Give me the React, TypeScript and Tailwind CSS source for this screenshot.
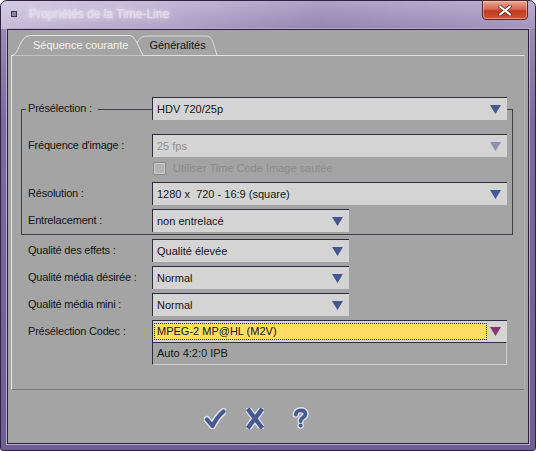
import React from 'react';

const Arrow = ({ color }: { color: string }) => (
  <svg width="11" height="9" viewBox="0 0 11 9">
    <path d="M0 0H11L5.5 9Z" fill={color} />
  </svg>
);

interface SelectProps {
  value: string;
  wide?: boolean;
  disabled?: boolean;
}

const Select: React.FC<SelectProps> = ({ value, wide = true, disabled = false }) => (
  <div
    className={`flex h-[23px] items-center justify-between border-l border-t border-[#2d2d3d] bg-[#d4d4d4] pl-[4px] pr-[6px] ${
      wide ? 'w-[355px]' : 'w-[197px]'
    }`}
  >
    <span className={`whitespace-pre ${disabled ? 'text-[#8e8e8e]' : 'text-[#141414]'}`}>{value}</span>
    <Arrow color={disabled ? '#8c92aa' : '#46568e'} />
  </div>
);

// rows inside the group box (label sits on the top line of the box)
const GroupRow: React.FC<{ label: string; children: React.ReactNode; className?: string }> = ({
  label,
  children,
  className = ''
}) => (
  <div className={`flex items-center ${className}`}>
    <div className="w-[130px] pl-[4px] tracking-[-0.2px]">
      <span className="bg-[#a4a4a4] pl-[2px] pr-[6px]">{label}</span>
    </div>
    {children}
  </div>
);

const Row: React.FC<{ label: string; children: React.ReactNode }> = ({ label, children }) => (
  <div className="mt-[4px] flex items-start pl-[16px]">
    <div className="flex h-[23px] w-[124px] items-center tracking-[-0.2px]">{label}</div>
    {children}
  </div>
);

const CheckIcon = () => (
  <svg width="22" height="21" viewBox="0 0 22 21">
    <path d="M3 11.5 L8.5 18 Q13 9 19.5 3.5" fill="none" stroke="#dde2f0" strokeWidth="7" strokeLinejoin="round" strokeLinecap="round" />
    <path d="M3 11.5 L8.5 18 Q13 9 19.5 3.5" fill="none" stroke="#48598f" strokeWidth="4.2" strokeLinejoin="round" strokeLinecap="round" />
  </svg>
);

const CrossIcon = () => (
  <svg width="18" height="21" viewBox="0 0 18 21">
    <path d="M3 2.5 L15 18.5 M15 2.5 L3 18.5" fill="none" stroke="#dde2f0" strokeWidth="7" strokeLinecap="square" />
    <path d="M3 2.5 L15 18.5 M15 2.5 L3 18.5" fill="none" stroke="#48598f" strokeWidth="4.4" strokeLinecap="square" />
  </svg>
);

const HelpIcon = () => (
  <svg width="17" height="22" viewBox="0 0 17 22">
    <path d="M3.8 7.5 C3.8 2 13.5 2 13.5 7 C13.5 10.5 8.6 10.5 8.6 14" fill="none" stroke="#dde2f0" strokeWidth="6.4" strokeLinecap="round" />
    <circle cx="8.6" cy="18.6" r="3.2" fill="#dde2f0" />
    <path d="M3.8 7.5 C3.8 2 13.5 2 13.5 7 C13.5 10.5 8.6 10.5 8.6 14" fill="none" stroke="#48598f" strokeWidth="3.8" strokeLinecap="round" />
    <circle cx="8.6" cy="18.6" r="2" fill="#48598f" />
  </svg>
);

const Tabs = () => (
  <div className="relative ml-[4px] mt-[5px] h-[20px] w-[230px]">
    <svg className="absolute left-0 top-0" width="230" height="21" viewBox="0 0 230 21">
      <path d="M125 8 C128 2 131 1 136 1 L194 1 C200 1 201 7 205 20.5" fill="none" stroke="#dcdcdc" strokeWidth="1" />
      <path d="M0 20.5 C7 20.5 7 1 18 0.5 L117 0.5 C124 0.5 126 12 131 20.5" fill="#a4a4a4" stroke="#e4e4e4" strokeWidth="1" />
    </svg>
    <div className="relative flex h-[20px] items-center">
      <span className="ml-[21px] text-[#f2f2f2]">Séquence courante</span>
      <span className="ml-[21px] text-[#151515]">Généralités</span>
    </div>
  </div>
);

export default function App() {
  return (
    <div className="h-[451px] w-[536px] bg-white font-['Liberation_Sans',Arial,sans-serif] text-[11px]">
      <div className="flex h-[451px] w-[536px] flex-col rounded-t-[7px] rounded-b-[3px] border border-[#2b2340] bg-[linear-gradient(180deg,#b9accd_0px,#9989b5_28px,#7b6a9d_120px,#6f5f91_100%)]">
        {/* title bar */}
        <div className="flex h-[28px] items-start justify-between rounded-t-[6px] bg-[linear-gradient(90deg,rgba(235,230,245,0.55)_0%,rgba(220,210,235,0.35)_30%,rgba(120,100,150,0.15)_60%,rgba(200,190,220,0.2)_100%)]">
          <div className="flex h-[24px] items-center pt-[1px]">
            <div className="ml-[10px] h-[6px] w-[6px] border border-[#3a3548] bg-[#8c8898]" />
            <span className="ml-[12px] text-[12px] text-[#e2dcec] [text-shadow:0_0_6px_rgba(255,255,255,0.9),0_0_2px_rgba(255,255,255,0.6)]">
              Propriétés de la Time-Line
            </span>
          </div>
          <div className="mr-[7px] -mt-[1px] flex h-[20px] w-[46px] items-center justify-center rounded-b-[4px] border border-[#5a2a2a] bg-[linear-gradient(180deg,#e8a898_0%,#d86850_45%,#c03a22_55%,#d0553a_100%)] shadow-[inset_0_0_0_1px_rgba(255,210,200,0.5)]">
            <svg width="14" height="11" viewBox="0 0 14 11">
              <path d="M2 1.5 L12 9.5 M12 1.5 L2 9.5" stroke="#6a2a20" strokeWidth="3.6" strokeLinecap="round" />
              <path d="M2 1.5 L12 9.5 M12 1.5 L2 9.5" stroke="#ffffff" strokeWidth="2.2" strokeLinecap="round" />
            </svg>
          </div>
        </div>

        {/* client area */}
        <div className="ml-[6px] flex h-[415px] w-[522px] flex-col border border-[#2a2238] bg-[#a4a4a4] shadow-[0_0_0_1px_#b8a8d4]">
          <Tabs />

          <div className="ml-[3px] h-[335px] w-[514px] border border-b-[#7c7c7c] border-l-[#e8e8e8] border-r-[#b0b0b0] border-t-[#e0e0e0] text-[#141414]">
            {/* group box */}
            <div className="ml-[9px] mt-[53px] w-[492px] border border-[#3e3e44] pb-[2px]">
              <GroupRow label="Présélection :" className="-mt-[13px]">
                <Select value="HDV 720/25p" />
              </GroupRow>
              <GroupRow label="Fréquence d'image :" className="mt-[14px]">
                <Select value="25 fps" disabled />
              </GroupRow>
              <div className="mt-[3px] flex h-[17px] items-center pl-[131px]">
                <div className="h-[13px] w-[13px] border border-[#8a8a8a] bg-[#b4b4b4] shadow-[inset_0_0_0_1px_#cacaca]" />
                <span className="ml-[7px] text-[#8b8b8b]">Utiliser Time Code Image sautée</span>
              </div>
              <GroupRow label="Résolution :" className="mt-[5px]">
                <Select value="1280 x  720 - 16:9 (square)" />
              </GroupRow>
              <GroupRow label="Entrelacement :" className="mt-[4px]">
                <Select value="non entrelacé" wide={false} />
              </GroupRow>
            </div>

            <Row label="Qualité des effets :">
              <Select value="Qualité élevée" wide={false} />
            </Row>
            <Row label="Qualité média désirée :">
              <Select value="Normal" wide={false} />
            </Row>
            <Row label="Qualité média mini :">
              <Select value="Normal" wide={false} />
            </Row>
            <Row label="Présélection Codec :">
              <div className="flex w-[355px] flex-col">
                <div className="flex h-[22px] items-center justify-between border-l border-t border-[#2d2d3d] bg-[#d4d4d4] pl-[1px] pr-[6px]">
                  <div className="flex h-[17px] w-[333px] items-center border border-dotted border-[#2a2a2a] bg-[#ffdc68] pl-[2px]">
                    MPEG-2 MP@HL (M2V)
                  </div>
                  <Arrow color="#86386e" />
                </div>
                <div className="flex h-[23px] items-center border-b border-l border-r border-t border-b-[#d0d0d0] border-l-[#2d2d3d] border-r-[#d0d0d0] border-t-[#2d2d3d] pl-[4px]">
                  Auto 4:2:0 IPB
                </div>
              </div>
            </Row>
          </div>

          {/* buttons */}
          <div className="mt-[17px] flex items-center pl-[196px]">
            <CheckIcon />
            <div className="ml-[20px]">
              <CrossIcon />
            </div>
            <div className="ml-[28px]">
              <HelpIcon />
            </div>
          </div>
        </div>
      </div>
    </div>
  );
}
